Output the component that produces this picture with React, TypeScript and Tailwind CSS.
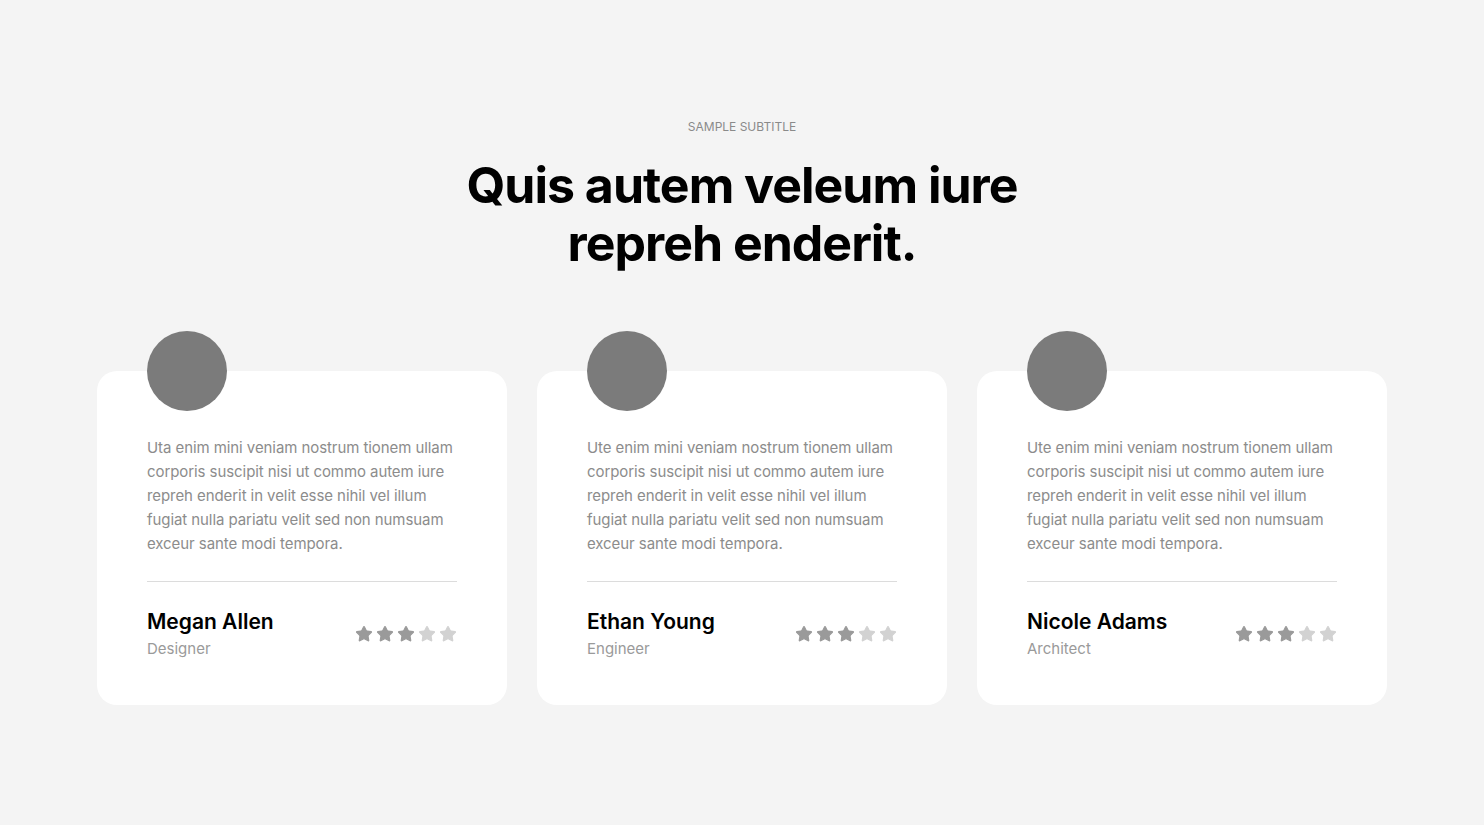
import { Star } from "lucide-react"

const testimonials = [
  {
    text: "Uta enim mini veniam nostrum tionem ullam corporis suscipit nisi ut commo autem iure repreh enderit in velit esse nihil vel illum fugiat nulla pariatu velit sed non numsuam exceur sante modi tempora.",
    name: "Megan Allen",
    role: "Designer",
    rating: 3,
  },
  {
    text: "Ute enim mini veniam nostrum tionem ullam corporis suscipit nisi ut commo autem iure repreh enderit in velit esse nihil vel illum fugiat nulla pariatu velit sed non numsuam exceur sante modi tempora.",
    name: "Ethan Young",
    role: "Engineer",
    rating: 3,
  },
  {
    text: "Ute enim mini veniam nostrum tionem ullam corporis suscipit nisi ut commo autem iure repreh enderit in velit esse nihil vel illum fugiat nulla pariatu velit sed non numsuam exceur sante modi tempora.",
    name: "Nicole Adams",
    role: "Architect",
    rating: 3,
  },
]

function Rating({ value }: { value: number }) {
  return (
    <div className="flex items-center gap-[3px]">
      {[0, 1, 2, 3, 4].map((i) => (
        <Star
          key={i}
          className={i < value ? "h-[18px] w-[18px] text-[#9a9a9a]" : "h-[18px] w-[18px] text-[#d2d2d2]"}
          fill="currentColor"
          strokeWidth={1.5}
        />
      ))}
    </div>
  )
}

export default function App() {
  return (
    <section className="min-h-screen bg-[#f4f4f4] pt-[119px] font-['Inter',sans-serif]">
      {/* Header */}
      <div className="flex flex-col items-center text-center">
        <span className="text-[12px] leading-[16px] uppercase text-[#8a8a8a]">
          Sample Subtitle
        </span>
        <h2 className="mt-[21px] text-[50px] leading-[58px] font-bold tracking-[-0.02em] text-black">
          Quis autem veleum iure
          <br />
          repreh enderit.
        </h2>
      </div>

      {/* Cards */}
      <div className="mx-auto mt-[99px] flex w-[1290px] gap-[30px]">
        {testimonials.map((t, i) => (
          <div key={i} className="flex w-[410px] flex-col rounded-[20px] bg-white px-[50px] pb-[46px]">
            <div className="-mt-[40px] h-[80px] w-[80px] rounded-full bg-[#7b7b7b]" />
            <p className="mt-[25px] text-[15px] leading-[24px] tracking-[-0.005em] text-[#8c8c8c]">{t.text}</p>
            <div className="mt-[25px] h-px bg-[#dcdcdc]" />
            <div className="mt-[26px] flex items-center justify-between">
              <div className="flex flex-col">
                <span className="text-[21px] leading-[28px] font-semibold text-black">{t.name}</span>
                <span className="mt-[3px] text-[15px] leading-[20px] text-[#9a9a9a]">{t.role}</span>
              </div>
              <Rating value={t.rating} />
            </div>
          </div>
        ))}
      </div>
    </section>
  )
}
